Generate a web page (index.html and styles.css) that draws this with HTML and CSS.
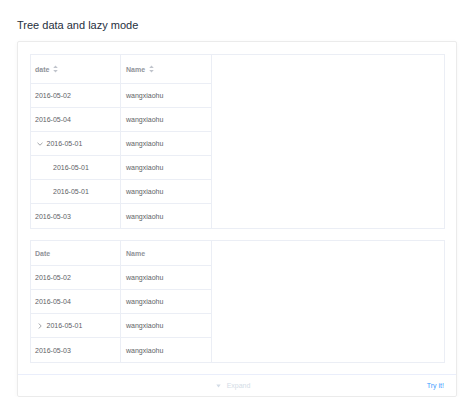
FILE: index.html
```html
<!DOCTYPE html>
<html>
<head>
<meta charset="utf-8">
<link rel="stylesheet" href="styles.css">
</head>
<body>
<div class="page">
  <h3 class="title">Tree data and lazy mode</h3>
  <div class="demo">
    <div class="source">
      <div class="tbl">
        <div class="grid">
          <div class="cell head head-sort">date <svg class="caret" width="5" height="8" viewBox="0 0 5 8"><path d="M2.5 0.5 L4.8 3 L0.2 3 Z M2.5 7.5 L4.8 5 L0.2 5 Z" fill="#c0c4cc"/></svg></div>
          <div class="cell head head-sort">Name <svg class="caret" width="5" height="8" viewBox="0 0 5 8"><path d="M2.5 0.5 L4.8 3 L0.2 3 Z M2.5 7.5 L4.8 5 L0.2 5 Z" fill="#c0c4cc"/></svg></div>
          <div class="cell">2016-05-02</div><div class="cell">wangxiaohu</div>
          <div class="cell">2016-05-04</div><div class="cell">wangxiaohu</div>
          <div class="cell"><span class="exp"><svg width="6" height="4" viewBox="0 0 6 4"><path d="M0.5 0.8 L3 3.2 L5.5 0.8" fill="none" stroke="#8a8d93" stroke-width="0.8"/></svg></span>2016-05-01</div><div class="cell">wangxiaohu</div>
          <div class="cell"><span class="indent"></span><span class="ph"></span>2016-05-01</div><div class="cell">wangxiaohu</div>
          <div class="cell"><span class="indent"></span><span class="ph"></span>2016-05-01</div><div class="cell">wangxiaohu</div>
          <div class="cell last">2016-05-03</div><div class="cell last">wangxiaohu</div>
        </div>
      </div>
      <div class="tbl">
        <div class="grid">
          <div class="cell head">Date</div>
          <div class="cell head">Name</div>
          <div class="cell">2016-05-02</div><div class="cell">wangxiaohu</div>
          <div class="cell">2016-05-04</div><div class="cell">wangxiaohu</div>
          <div class="cell"><span class="exp"><svg width="4" height="6" viewBox="0 0 4 6"><path d="M0.8 0.5 L3.2 3 L0.8 5.5" fill="none" stroke="#8a8d93" stroke-width="0.8"/></svg></span>2016-05-01</div><div class="cell">wangxiaohu</div>
          <div class="cell last">2016-05-03</div><div class="cell last">wangxiaohu</div>
        </div>
      </div>
    </div>
    <div class="control">
      <span class="expand"><svg width="5" height="4" viewBox="0 0 5 4"><path d="M0.3 0.5 L4.7 0.5 L2.5 3.5 Z" fill="#d3dce6"/></svg>Expand</span>
      <span class="try">Try it!</span>
    </div>
  </div>
</div>
</body>
</html>
```
FILE: styles.css
```css
* { box-sizing: border-box; }
html, body { margin: 0; padding: 0; background: #fff; }
body { font-family: "Liberation Sans", Arial, sans-serif; }
.page { padding: 18px 18px 0 17px; width: 474px; }
.title {
  margin: 0 0 9px 0;
  font-size: 11px;
  line-height: 14px;
  font-weight: normal;
  color: #1f2f3d;
}
.demo {
  width: 440px;
  border: 1px solid #ebebeb;
  border-radius: 2px;
  box-shadow: 0 1px 4px rgba(0,0,0,0.04);
}
.source {
  padding: 12px 12px 11px 12px;
  display: flex;
  flex-direction: column;
  gap: 11px;
}
.tbl {
  border: 1px solid #ebeef5;
  display: flex;
  width: 415px;
}
.grid {
  display: grid;
  grid-template-columns: 90px 91px;
}
.cell {
  height: 24px;
  border-bottom: 1px solid #ebeef5;
  border-right: 1px solid #ebeef5;
  font-size: 7px;
  color: #606266;
  padding-left: 4px;
  display: flex;
  align-items: center;
}
.cell:nth-child(2n) { padding-left: 5px; }
.cell.last { border-bottom: none; height: 24px; }
.cell.head { color: #909399; font-weight: bold; height: 25px; }
.cell.head-sort { height: 29px; }
.caret { margin-left: 4px; }
.exp {
  width: 10px;
  margin-right: 1.5px;
  display: inline-flex;
  align-items: center;
  justify-content: center;
}
.indent { display: inline-block; width: 8px; }
.ph { display: inline-block; width: 10px; }
.control {
  position: relative;
  height: 22px;
  border-top: 1px solid #eaeefb;
  display: flex;
  align-items: center;
  justify-content: center;
  font-size: 7px;
}
.expand { color: #d3dce6; display: flex; align-items: center; gap: 6px; margin-left: -8px; }
.try { position: absolute; right: 12px; color: #409eff; }
```
